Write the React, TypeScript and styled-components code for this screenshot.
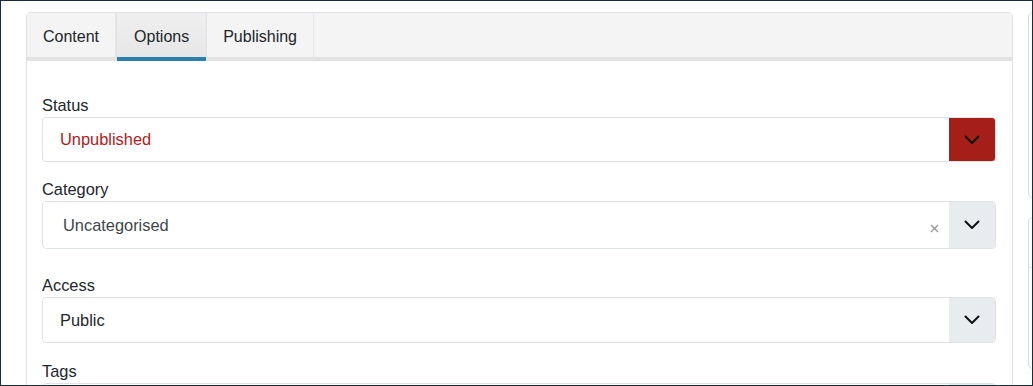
import styled, { createGlobalStyle } from "styled-components";

const GlobalStyle = createGlobalStyle`
  * {
    box-sizing: border-box;
  }

  body {
    margin: 0;
    background: #ffffff;
    font-family: "Liberation Sans", Arial, sans-serif;
    color: #22262a;
  }
`;

const Frame = styled.div`
  width: 1033px;
  height: 386px;
  border: 1px solid #1c2a3e;
  background: #ffffff;
  overflow: hidden;
`;

const Layout = styled.div`
  display: flex;
  gap: 15px;
  padding: 11px 0 0 25px;
`;

const Card = styled.section`
  flex: 0 0 987px;
  border: 1px solid #dfe3e7;
  border-bottom: none;
  border-radius: 5px 5px 0 0;
  overflow: hidden;
`;

const TabBar = styled.div`
  display: flex;
  height: 48px;
  background: #f4f4f4;
  box-shadow: inset 0 -4px 0 #e2e2e2;
`;

const Tab = styled.button<{ $active?: boolean }>`
  height: 48px;
  padding: 0 ${({ $active }) => ($active ? 17 : 16)}px;
  border: none;
  border-right: 1px solid ${({ $active }) => ($active ? "#e2e2e2" : "#e6e6e6")};
  border-left: ${({ $active }) => ($active ? "1px solid #e2e2e2" : "none")};
  background: ${({ $active }) =>
    $active ? "linear-gradient(#efefef, #e6e6e6)" : "transparent"};
  box-shadow: ${({ $active }) =>
    $active ? "inset 0 -4px 0 #2a7fad" : "none"};
  font-family: inherit;
  font-size: 16px;
  color: #22262a;
  line-height: 48px;
  cursor: pointer;
`;

const Body = styled.div`
  padding: 33px 16px 0 15px;
`;

const Group = styled.div<{ $gap: number }>`
  margin-bottom: ${({ $gap }) => $gap}px;
`;

const Label = styled.label`
  display: block;
  font-size: 16.4px;
  line-height: 23px;
  color: #22262a;
`;

const SelectBox = styled.div<{ $height: number }>`
  display: flex;
  height: ${({ $height }) => $height}px;
  border: 1px solid #dfe3e7;
  border-radius: 4px;
  overflow: hidden;
  background: #ffffff;
`;

const Value = styled.div<{ $color: string; $indent: number }>`
  flex: 1;
  display: flex;
  align-items: center;
  padding-left: ${({ $indent }) => $indent}px;
  font-size: 16.4px;
  color: ${({ $color }) => $color};
`;

const Clear = styled.span`
  display: flex;
  align-items: center;
  padding: 6px 10px 0 0;
`;

const Caret = styled.div<{ $bg: string }>`
  flex: 0 0 46px;
  display: flex;
  align-items: center;
  justify-content: center;
  background: ${({ $bg }) => $bg};
`;

const Side = styled.aside`
  flex: 0 0 200px;
  display: flex;
  flex-direction: column;
  gap: 19px;
`;

const SideBox = styled.div<{ $height: number }>`
  height: ${({ $height }) => $height}px;
  border: 1px solid #d8dde2;
  border-radius: 5px;
`;

const SideHead = styled.div`
  height: 50px;
  border-bottom: 1px solid #dfe3e7;
`;

function Chevron() {
  return (
    <svg width="16" height="10" viewBox="0 0 16 10" fill="none">
      <polyline
        points="1.5,1.5 8,8 14.5,1.5"
        stroke="#111"
        strokeWidth="2"
        strokeLinecap="round"
        strokeLinejoin="round"
      />
    </svg>
  );
}

function Cross() {
  return (
    <svg width="9" height="9" viewBox="0 0 9 9">
      <path d="M1 1 L8 8 M8 1 L1 8" stroke="#9a9a9a" strokeWidth="1.4" />
    </svg>
  );
}

type FieldProps = {
  label: string;
  value: string;
  height: number;
  gap: number;
  color?: string;
  indent?: number;
  caretBg?: string;
  clearable?: boolean;
};

function Field({
  label,
  value,
  height,
  gap,
  color = "#22262a",
  indent = 17,
  caretBg = "#e9ecef",
  clearable = false,
}: FieldProps) {
  return (
    <Group $gap={gap}>
      <Label>{label}</Label>
      <SelectBox $height={height}>
        <Value $color={color} $indent={indent}>
          {value}
        </Value>
        {clearable && (
          <Clear>
            <Cross />
          </Clear>
        )}
        <Caret $bg={caretBg}>
          <Chevron />
        </Caret>
      </SelectBox>
    </Group>
  );
}

export default function App() {
  return (
    <>
      <GlobalStyle />
      <Frame>
        <Layout>
          <Card>
            <TabBar>
              <Tab>Content</Tab>
              <Tab $active>Options</Tab>
              <Tab>Publishing</Tab>
            </TabBar>
            <Body>
              <Field
                label="Status"
                value="Unpublished"
                height={45}
                gap={16}
                color="#b3191d"
                caretBg="#a51f18"
              />
              <Field
                label="Category"
                value="Uncategorised"
                height={48}
                gap={25}
                color="#41464b"
                indent={20}
                clearable
              />
              <Field label="Access" value="Public" height={46} gap={17} />
              <Field label="Tags" value="" height={46} gap={0} />
            </Body>
          </Card>
          <Side>
            <SideBox $height={186} />
            <SideBox $height={152}>
              <SideHead />
            </SideBox>
          </Side>
        </Layout>
      </Frame>
    </>
  );
}
